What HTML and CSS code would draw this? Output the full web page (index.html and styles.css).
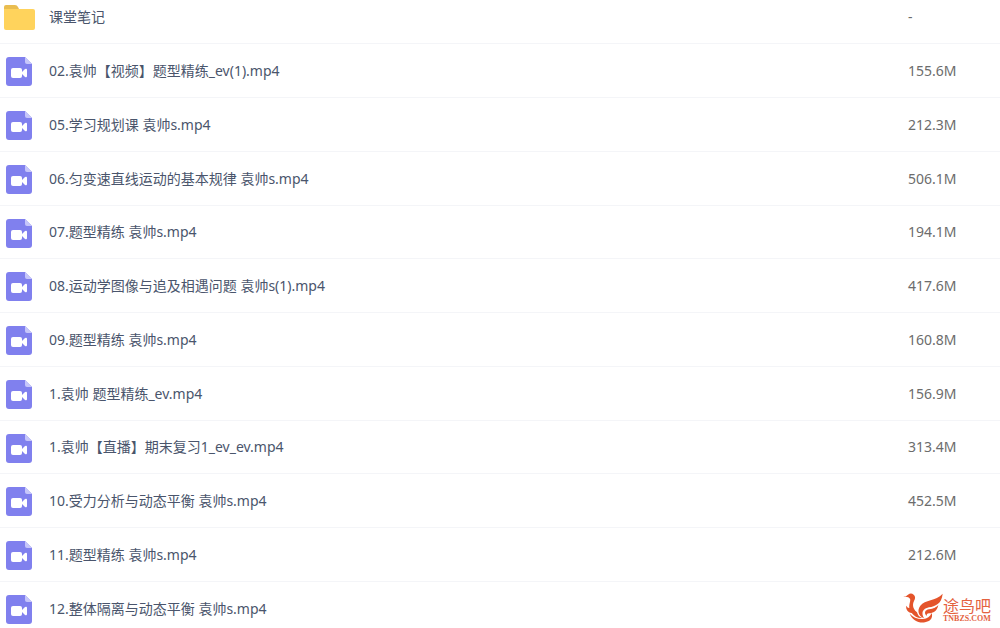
FILE: index.html
```html
<!DOCTYPE html>
<html lang="zh-CN">
<head>
<meta charset="utf-8">
<title>课堂笔记</title>
<link rel="stylesheet" href="styles.css">
</head>
<body>
<svg class="defs" aria-hidden="true">
  <symbol id="video" viewBox="0 0 26 29">
    <path d="M3 0H19L26 7V26a3 3 0 0 1-3 3H3a3 3 0 0 1-3-3V3a3 3 0 0 1 3-3Z" fill="#8080ee"/>
    <path d="M19 0L26 7H21a2 2 0 0 1-2-2Z" fill="#c6c6fa"/>
    <rect x="5" y="11" width="11" height="10" rx="2" fill="#fff"/>
    <path d="M16 15L19 12Q21 11 21 13V19Q21 21 19 20L16 17Z" fill="#fff"/>
  </symbol>
  <symbol id="folder" viewBox="0 0 31 25">
    <path d="M2 0H11Q13 0 14 2L15 4H29V12H0V2Q0 0 2 0Z" fill="#e9bd50"/>
    <path d="M0 4H29Q31 4 31 6V23Q31 25 29 25H2Q0 25 0 23Z" fill="#ffd35c"/>
  </symbol>
</svg>
<main class="page">
  <table class="files">
    <tbody>
      <tr><td class="icon"><svg class="folder"><use href="#folder"/></svg></td><td class="name"><a href="#">课堂笔记</a></td><td class="size">-</td></tr>
      <tr><td class="icon"><svg class="video"><use href="#video"/></svg></td><td class="name"><a href="#">02.袁帅【视频】题型精练_ev(1).mp4</a></td><td class="size">155.6M</td></tr>
      <tr><td class="icon"><svg class="video"><use href="#video"/></svg></td><td class="name"><a href="#">05.学习规划课 袁帅s.mp4</a></td><td class="size">212.3M</td></tr>
      <tr><td class="icon"><svg class="video"><use href="#video"/></svg></td><td class="name"><a href="#">06.匀变速直线运动的基本规律 袁帅s.mp4</a></td><td class="size">506.1M</td></tr>
      <tr><td class="icon"><svg class="video"><use href="#video"/></svg></td><td class="name"><a href="#">07.题型精练 袁帅s.mp4</a></td><td class="size">194.1M</td></tr>
      <tr><td class="icon"><svg class="video"><use href="#video"/></svg></td><td class="name"><a href="#">08.运动学图像与追及相遇问题 袁帅s(1).mp4</a></td><td class="size">417.6M</td></tr>
      <tr><td class="icon"><svg class="video"><use href="#video"/></svg></td><td class="name"><a href="#">09.题型精练 袁帅s.mp4</a></td><td class="size">160.8M</td></tr>
      <tr><td class="icon"><svg class="video"><use href="#video"/></svg></td><td class="name"><a href="#">1.袁帅 题型精练_ev.mp4</a></td><td class="size">156.9M</td></tr>
      <tr><td class="icon"><svg class="video"><use href="#video"/></svg></td><td class="name"><a href="#">1.袁帅【直播】期末复习1_ev_ev.mp4</a></td><td class="size">313.4M</td></tr>
      <tr><td class="icon"><svg class="video"><use href="#video"/></svg></td><td class="name"><a href="#">10.受力分析与动态平衡 袁帅s.mp4</a></td><td class="size">452.5M</td></tr>
      <tr><td class="icon"><svg class="video"><use href="#video"/></svg></td><td class="name"><a href="#">11.题型精练 袁帅s.mp4</a></td><td class="size">212.6M</td></tr>
      <tr><td class="icon"><svg class="video"><use href="#video"/></svg></td><td class="name"><a href="#">12.整体隔离与动态平衡 袁帅s.mp4</a></td><td class="size"></td></tr>
    </tbody>
  </table>
  <div class="brand">
    <svg class="bird" viewBox="0 0 120 90" aria-hidden="true">
      <g fill="#e4542b">
        <path d="M0 12Q10 10 15 5Q24-2 32 5Q40 12 33 24C27 36 30 48 42 58C44 66 48 72 58 75C46 77 34 70 26 60C12 58 8 46 10 38Q14 46 19 45C17 34 24 24 21 17Q16 9 0 12Z"/>
        <path d="M119 2C116 34 96 39 78 43C58 47 54 60 63 76C45 68 42 51 52 38C66 18 98 26 119 2Z"/>
        <path d="M106 36C102 56 90 60 78 61Q70 62 71 69C62 60 66 51 78 49C92 47 98 44 106 36Z"/>
        <path d="M20 62C28 82 46 91 66 88C84 85 90 74 86 60C81 71 73 77 60 78C44 79 30 73 20 62Z"/>
      </g>
    </svg>
    <div class="brand-text"><span class="brand-name">途鸟吧</span><span class="brand-site">TNBZS.COM</span></div>
  </div>
</main>
</body>
</html>
```

FILE: styles.css
```css
* { box-sizing: border-box; }
body {
  margin: 0;
  background: #fff;
  color: #4a556c;
  font: 14px/20px "Noto Sans", "Noto Sans CJK SC", sans-serif;
}
.defs { position: absolute; width: 0; height: 0; }
.page { position: relative; height: 100vh; overflow: hidden; }
.files { width: 100%; border-collapse: separate; border-spacing: 0; table-layout: fixed; }
.files td { height: 54px; padding: 0; border-bottom: 1px solid #f4f5f8; vertical-align: middle; }
.files tr:nth-child(4n+1) td { height: 53px; }
.files tr:first-child td { height: 44px; padding-bottom: 9px; }
.files .icon { width: 49px; padding-left: 4px; }
.files .size { width: 92px; color: #6c6c6c; }
.icon svg { display: block; }
.folder { width: 31px; height: 25px; }
.files .video { width: 26px; height: 29px; margin: 2px 0 0 2px; }
.name a { color: inherit; text-decoration: none; }
.brand { position: absolute; right: 9px; bottom: 4px; display: flex; align-items: center; color: #e4623f; }
.bird { width: 40px; height: 30px; }
.brand-text { display: flex; flex-direction: column; padding-top: 4px; }
.brand-name { font: 16px/18px "Noto Sans CJK SC", sans-serif; }
.brand-site { font: bold 8px/10px "Liberation Serif", serif; }
```
